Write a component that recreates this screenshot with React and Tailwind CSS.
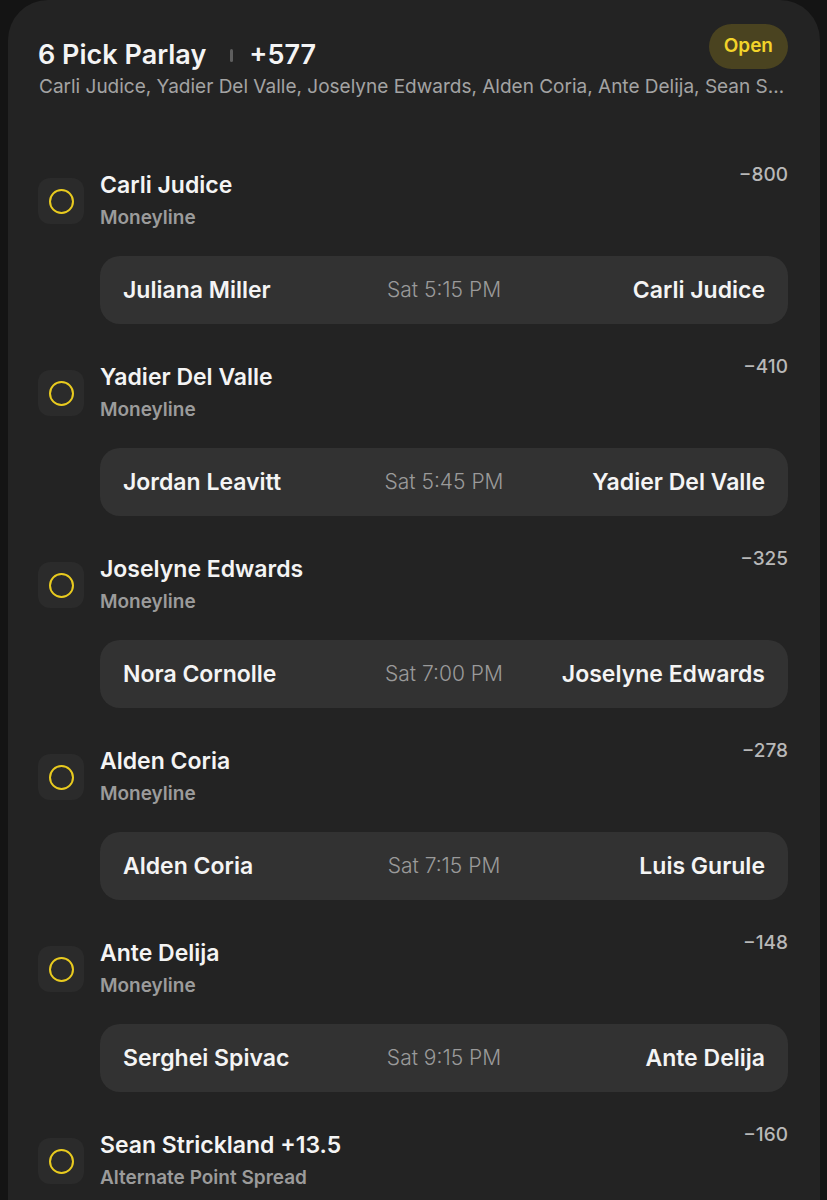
import React from 'react';

const LEGS = [
  { pick: 'Carli Judice', market: 'Moneyline', odds: '−800', home: 'Juliana Miller', time: 'Sat 5:15 PM', away: 'Carli Judice' },
  { pick: 'Yadier Del Valle', market: 'Moneyline', odds: '−410', home: 'Jordan Leavitt', time: 'Sat 5:45 PM', away: 'Yadier Del Valle' },
  { pick: 'Joselyne Edwards', market: 'Moneyline', odds: '−325', home: 'Nora Cornolle', time: 'Sat 7:00 PM', away: 'Joselyne Edwards' },
  { pick: 'Alden Coria', market: 'Moneyline', odds: '−278', home: 'Alden Coria', time: 'Sat 7:15 PM', away: 'Luis Gurule' },
  { pick: 'Ante Delija', market: 'Moneyline', odds: '−148', home: 'Serghei Spivac', time: 'Sat 9:15 PM', away: 'Ante Delija' },
  { pick: 'Sean Strickland +13.5', market: 'Alternate Point Spread', odds: '−160' },
];

function Leg({ leg }) {
  return (
    <div className="flex gap-4">
      <div className="mt-[7px] flex h-[46px] w-[46px] shrink-0 items-center justify-center rounded-xl bg-[#2b2b2b]">
        <div className="h-[25px] w-[25px] rounded-full border-2 border-[#e9cb1f]" />
      </div>
      <div className="flex-1">
        <div className="flex items-start justify-between">
          <div>
            <div className="text-[23px] font-semibold leading-[28px] text-[#f4f4f4]">{leg.pick}</div>
            <div className="mt-[7px] text-[19px] font-semibold leading-[24px] text-[#9b9b9b]">{leg.market}</div>
          </div>
          <div className="-mt-2 text-[19px] font-medium leading-[24px] text-[#b8b8b8]">{leg.odds}</div>
        </div>
        {leg.home && (
          <div className="mt-[26px] grid h-[68px] grid-cols-[1fr_auto_1fr] items-center rounded-[20px] bg-[#323232] px-[23px]">
            <span className="text-[23px] font-semibold text-[#f4f4f4]">{leg.home}</span>
            <span className="text-[21px] font-light text-[#9a9a9a]">{leg.time}</span>
            <span className="text-right text-[23px] font-semibold text-[#f4f4f4]">{leg.away}</span>
          </div>
        )}
      </div>
    </div>
  );
}

export default function App() {
  return (
    <div className="h-[1200px] overflow-hidden bg-[#141414] pl-[8px] pr-[7px]" style={{ fontFamily: 'Inter, "Noto Sans", sans-serif' }}>
      <div className="h-full rounded-t-[40px] bg-[#232323] pl-[30px] pr-[32px]">
        {/* header */}
        <div className="flex items-start justify-between pt-[24px]">
          <div className="mt-[15px] flex items-center text-[27px] font-semibold leading-[32px] text-[#f4f4f4]">
            <span>6 Pick Parlay</span>
            <span className="ml-[24px] mr-[16px] h-[13px] w-[3px] rounded-full bg-[#5e5e5e]" />
            <span>+577</span>
          </div>
          <div className="flex h-[45px] items-center rounded-full bg-[#4a4320] px-[15px] text-[19px] font-semibold text-[#f2d32a]">
            Open
          </div>
        </div>
        <div className="mt-[4px] truncate pl-[1px] text-[19px] leading-[24px] text-[#a3a3a3]">
          Carli Judice, Yadier Del Valle, Joselyne Edwards, Alden Coria, Ante Delija, Sean Strickland
        </div>

        {/* legs */}
        <div className="mt-[72px] flex flex-col gap-[39px]">
          {LEGS.map((leg) => (
            <Leg key={leg.pick} leg={leg} />
          ))}
        </div>
      </div>
    </div>
  );
}
